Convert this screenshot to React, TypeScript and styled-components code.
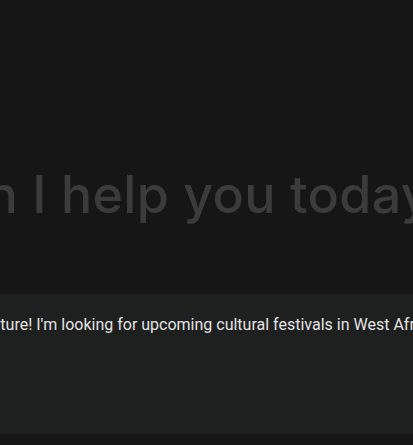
import React from "react";
import styled, { createGlobalStyle } from "styled-components";

const Global = createGlobalStyle`
  html, body {
    margin: 0;
    padding: 0;
    background: #161616;
    overflow: hidden;
  }
`;

const Page = styled.main`
  height: 445px;
  display: flex;
  flex-direction: column;
  overflow: hidden;
`;

const Hero = styled.section`
  flex: 1;
  display: flex;
  justify-content: center;
  padding-top: 169px;
  padding-right: 156px;
`;

const Greeting = styled.h1`
  margin: 0;
  flex: none;
  white-space: nowrap;
  font-family: Inter, sans-serif;
  font-weight: 500;
  font-size: 52px;
  line-height: 52px;
  letter-spacing: 0.3px;
  color: #3b3b3b;
`;

const Composer = styled.div`
  height: 140px;
  margin-bottom: 11px;
  background: #1e1f1f;
  display: flex;
  justify-content: center;
`;

const Prompt = styled.p`
  margin: 0;
  padding-top: 19px;
  flex: none;
  white-space: nowrap;
  font-family: Roboto, sans-serif;
  font-size: 16px;
  line-height: 24px;
  color: #e3e3e3;
`;

export default function App() {
  return (
    <>
      <Global />
      <Page>
        <Hero>
          <Greeting>How can I help you today?</Greeting>
        </Hero>
        <Composer>
          <Prompt>
            Culture! I'm looking for upcoming cultural festivals in West Africa
          </Prompt>
        </Composer>
      </Page>
    </>
  );
}
